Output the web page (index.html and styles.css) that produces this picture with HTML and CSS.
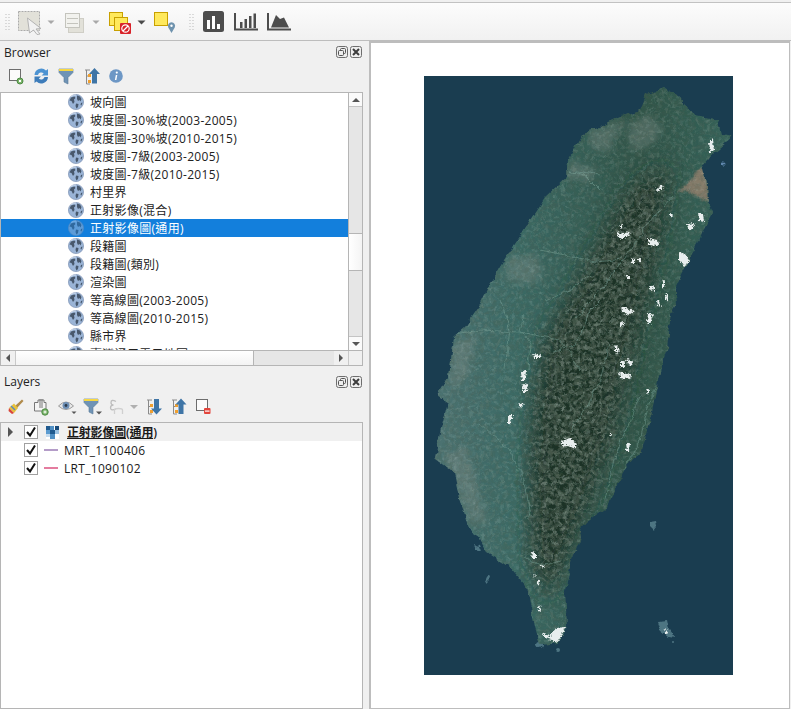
FILE: index.html
```html
<!DOCTYPE html>
<html lang="zh-Hant">
<head>
<meta charset="utf-8">
<title>QGIS</title>
<link rel="stylesheet" href="styles.css">
</head>
<body>
<svg class="defs" width="0" height="0" aria-hidden="true">
  <defs>
    <symbol id="globe" viewBox="0 0 16 16">
      <circle cx="8" cy="8" r="7.600" fill="#9ab4d6" stroke="#7f94b4" stroke-width=".7"/>
      <path d="M3 3.500 6.500 2.500 7.500 4 6 5.500 6.500 8 5 10 3.500 7 1.500 6.500ZM9 1.500 12 2.500 13.500 5 12.500 7.500 11.500 6 10 7 9 5ZM8 9.500 10.500 10 10 13 8.500 14.500 7.500 12ZM13 9 14.500 8.500 13.500 11.500 12.500 11Z" fill="#48586c"/>
      <path d="M3 2.500A7 7 0 0 1 8 1" stroke="#dfe8f4" stroke-width=".8" fill="none"/>
    </symbol>
    <symbol id="check" viewBox="0 0 14 14">
      <path d="M3 7 6 10.500 11 2.500" fill="none" stroke="#111" stroke-width="2"/>
    </symbol>
    <symbol id="dockfloat" viewBox="0 0 12 12">
      <rect x=".5" y=".5" width="11" height="11" rx="2" fill="#eee" stroke="#6e6e6e"/>
      <rect x="4.500" y="2.500" width="5" height="5" rx="1" fill="none" stroke="#555"/>
      <rect x="2.500" y="4.500" width="5" height="5" rx="1" fill="#eee" stroke="#555"/>
    </symbol>
    <symbol id="dockclose" viewBox="0 0 12 12">
      <rect x=".5" y=".5" width="11" height="11" rx="2" fill="#eee" stroke="#6e6e6e"/>
      <path d="M3 3 9 9M9 3 3 9" stroke="#3c3c3c" stroke-width="2"/>
    </symbol>
    <filter id="noiseDark" x="0" y="0" width="100%" height="100%">
      <feTurbulence type="fractalNoise" baseFrequency=".2" numOctaves="3" seed="7"/>
      <feColorMatrix values="0 0 0 0 .07  0 0 0 0 .11  0 0 0 0 .08  2.600 0 0 0 -.95"/>
    </filter>
    <filter id="noiseLight" x="0" y="0" width="100%" height="100%">
      <feTurbulence type="fractalNoise" baseFrequency=".26" numOctaves="3" seed="21"/>
      <feColorMatrix values="0 0 0 0 .5  0 0 0 0 .6  0 0 0 0 .54  0 2 0 0 -.9"/>
    </filter>
    <filter id="blur10"><feGaussianBlur stdDeviation="10"/></filter>
    <filter id="blur5"><feGaussianBlur stdDeviation="3.500"/></filter>
    <filter id="blur1"><feGaussianBlur stdDeviation="1.200"/></filter>
    <filter id="blur03"><feGaussianBlur stdDeviation=".4"/></filter>
    <filter id="rough" filterUnits="userSpaceOnUse" x="424" y="76" width="309" height="599">
      <feTurbulence type="fractalNoise" baseFrequency=".09" numOctaves="4" seed="3" result="n"/>
      <feDisplacementMap in="SourceGraphic" in2="n" scale="7" xChannelSelector="R" yChannelSelector="G"/>
      <feGaussianBlur stdDeviation=".45"/>
    </filter>
    <filter id="roughFine" filterUnits="userSpaceOnUse" x="424" y="76" width="309" height="599">
      <feTurbulence type="fractalNoise" baseFrequency=".55" numOctaves="2" seed="11" result="n"/>
      <feDisplacementMap in="SourceGraphic" in2="n" scale="5" xChannelSelector="R" yChannelSelector="G"/>
      <feGaussianBlur stdDeviation=".55"/>
    </filter>
    <clipPath id="island">
      <path d="M665 88 677 95 683 105 697 115 718 120 722 135 732 137 713 153 703 165 707 183 708 203 712 213 703 230 695 250 683 270 675 287 677 303 672 313 667 347 658 380 653 407 642 450 627 467 612 495 608 507 583 525 580 540 572 560 565 590 567 627 558 643 540 645 535 628 527 587 510 567 487 552 467 523 460 497 455 473 435 458 440 433 448 403 437 395 448 377 453 337 465 327 477 310 488 287 500 267 513 245 530 220 545 197 567 177 568 160 583 133 617 118 640 110 647 93Z"/>
    </clipPath>
    <mask id="ridgeMask" maskUnits="userSpaceOnUse" x="424" y="76" width="309" height="599">
      <path d="M668 165 660 230 645 300 630 360 612 440 590 500 565 560 548 600 532 560 530 470 535 400 545 340 590 260 630 190Z" fill="#fff" filter="url(#blur10)"/>
    </mask>
  </defs>
</svg>

<header class="maintb">
  <svg viewBox="0 3 14 37"><path d="M6 14v1M9 14v1M6 17v1M9 17v1M6 20v1M9 20v1M6 23v1M9 23v1M6 26v1M9 26v1M6 29v1M9 29v1" stroke="#bbb"/></svg>
  <svg viewBox="14 3 30 37">
    <rect x="18.500" y="11.500" width="21" height="19" fill="#e2e1d9" stroke="#aaa" stroke-dasharray="2 1"/>
    <path d="M27.500 18 41 28.500 36 29 40 34 37 34.500 33.500 30 29.500 33Z" fill="#f2f2f2" stroke="#b3b3b3"/>
  </svg>
  <svg viewBox="44 3 16 37"><path d="M47.500 20.500h7l-3.500 3.500Z" fill="#a8a8a8"/></svg>
  <svg viewBox="60 3 28 37">
    <rect x="68.500" y="18.500" width="15" height="14" fill="#e2e1d9" stroke="#cfcec6"/>
    <rect x="65.500" y="13.500" width="14" height="14" fill="#f2f2ee" stroke="#c4c4bd"/>
    <path d="M67 18.500h11M67 23.500h11" stroke="#c4c4bd"/>
  </svg>
  <svg viewBox="88 3 16 37"><path d="M92.500 20.500h7l-3.500 3.500Z" fill="#a8a8a8"/></svg>
  <svg viewBox="104 3 30 37">
    <rect x="109.500" y="12.500" width="13" height="13" fill="#ffe95c" stroke="#c8a000"/>
    <rect x="114.500" y="17.500" width="13" height="13" fill="#ffe95c" stroke="#c8a000"/>
    <rect x="120" y="23" width="11" height="11" rx="1" fill="#d8232a"/>
    <circle cx="125.500" cy="28.500" r="3.700" fill="none" stroke="#fff" stroke-width="1.200"/>
    <path d="M123 31 128 26" stroke="#fff" stroke-width="1.200"/>
  </svg>
  <svg viewBox="134 3 16 37"><path d="M137.500 20.500h8l-4 4Z" fill="#4a4a4a"/></svg>
  <svg viewBox="150 3 30 37">
    <rect x="154.500" y="12.500" width="13" height="13" fill="#ffe95c" stroke="#c8a000"/>
    <path d="M171.500 33 168.300 27.500A3.600 3.600 0 1 1 174.700 27.500Z" fill="#6f93ae"/>
    <circle cx="171.500" cy="25.800" r="1.200" fill="#fff"/>
  </svg>
  <svg viewBox="180 3 18 37"><path d="M190 14v1M193 14v1M190 17v1M193 17v1M190 20v1M193 20v1M190 23v1M193 23v1M190 26v1M193 26v1M190 29v1M193 29v1" stroke="#bbb"/></svg>
  <svg viewBox="198 3 30 37">
    <rect x="203" y="11" width="21" height="21" rx="2.500" fill="#4d4d4d"/>
    <path d="M207 20h3v9h-3ZM212 16h3v13h-3ZM217 24h3v5h-3Z" fill="#fff"/>
  </svg>
  <svg viewBox="228 3 34 37">
    <path d="M235 13v16.500h23" fill="none" stroke="#4d4d4d" stroke-width="2"/>
    <path d="M240 22h2.500v6H240ZM244.500 19h2.500v9h-2.500ZM249 16h2.500v12H249ZM253.500 13.500h2.500V28h-2.500Z" fill="#4d4d4d"/>
  </svg>
  <svg viewBox="262 3 34 37">
    <path d="M268 13v16.500h23" fill="none" stroke="#4d4d4d" stroke-width="2"/>
    <path d="M271 27.500 276 15 280 19 284 17.500 289 27.500Z" fill="#4d4d4d"/>
  </svg>
</header>

<main class="workspace">
  <aside class="side">
    <section class="dock">
      <div class="dock-title">
        <span>Browser</span>
        <span class="dock-btns">
          <svg class="dock-ic"><use href="#dockfloat"/></svg>
          <svg class="dock-ic"><use href="#dockclose"/></svg>
        </span>
      </div>
      <div class="tb tb-browser">
        <svg viewBox="0 64 29 28">
          <rect x="9.500" y="69.500" width="11" height="11" fill="#fbfbfb" stroke="#6d6d6d"/>
          <circle cx="20" cy="81" r="3" fill="#7cb56b" stroke="#4c8a44"/>
          <rect x="19" y="80" width="2" height="2" fill="#fff"/>
        </svg>
        <svg viewBox="29 64 25 28">
          <path d="M34.500 75A6.800 6.800 0 0 1 46 70.500L48 69V75.500H41.500L43.700 73.500A3.400 3.400 0 0 0 38 75Z" fill="#4d93d2"/>
          <path d="M48 77A6.800 6.800 0 0 1 36.500 81.500L34.500 83V76.500H41L38.800 78.500A3.400 3.400 0 0 0 44.500 77Z" fill="#3d7cba"/>
        </svg>
        <svg viewBox="54 64 25 28">
          <path d="M59 69H73V72.500L68 77.500V84L64 82V77.500L59 72.500Z" fill="#6f93b5" stroke="#587a99" stroke-width=".6"/>
          <rect x="59" y="69" width="14" height="2" fill="#f6d743"/>
        </svg>
        <svg viewBox="79 64 25 28">
          <path d="M85 70H90M86.500 70V84H90M86.500 76H90" stroke="#8a8a8a" fill="none"/>
          <rect x="88" y="74" width="3" height="3" fill="#f0a030"/><rect x="88" y="80" width="3" height="3" fill="#f0a030"/>
          <path d="M94.500 68 100 74H97V83.500H92V74H89Z" fill="#3f75a6"/>
        </svg>
        <svg viewBox="104 64 25 28">
          <circle cx="116" cy="76" r="6.800" fill="#6d97c5"/>
          <circle cx="116.800" cy="72.600" r="1.100" fill="#fff"/>
          <path d="M115.800 75H117.300L116.400 80H114.900Z" fill="#fff"/>
        </svg>
      </div>
      <div class="tree tree-browser">
        <ul class="rows">
          <li class="row"><svg class="globe"><use href="#globe"/></svg>坡向圖</li>
          <li class="row"><svg class="globe"><use href="#globe"/></svg>坡度圖-30%坡(2003-2005)</li>
          <li class="row"><svg class="globe"><use href="#globe"/></svg>坡度圖-30%坡(2010-2015)</li>
          <li class="row"><svg class="globe"><use href="#globe"/></svg>坡度圖-7級(2003-2005)</li>
          <li class="row"><svg class="globe"><use href="#globe"/></svg>坡度圖-7級(2010-2015)</li>
          <li class="row"><svg class="globe"><use href="#globe"/></svg>村里界</li>
          <li class="row"><svg class="globe"><use href="#globe"/></svg>正射影像(混合)</li>
          <li class="row selected"><svg class="globe"><use href="#globe"/></svg>正射影像圖(通用)</li>
          <li class="row"><svg class="globe"><use href="#globe"/></svg>段籍圖</li>
          <li class="row"><svg class="globe"><use href="#globe"/></svg>段籍圖(類別)</li>
          <li class="row"><svg class="globe"><use href="#globe"/></svg>渲染圖</li>
          <li class="row"><svg class="globe"><use href="#globe"/></svg>等高線圖(2003-2005)</li>
          <li class="row"><svg class="globe"><use href="#globe"/></svg>等高線圖(2010-2015)</li>
          <li class="row"><svg class="globe"><use href="#globe"/></svg>縣市界</li>
          <li class="row"><svg class="globe"><use href="#globe"/></svg>臺灣通用電子地圖</li>
        </ul>
        <div class="vscroll">
          <div class="sbtn"><span class="arr up"></span></div>
          <div class="strack grow1"></div>
          <div class="sthumb"></div>
          <div class="strack grow2"></div>
          <div class="sbtn"><span class="arr down"></span></div>
        </div>
        <div class="hscroll">
          <div class="hbtn"><span class="arr left"></span></div>
          <div class="hthumb"></div>
          <div class="htrack"></div>
          <div class="hbtn"><span class="arr right"></span></div>
          <div class="corner"></div>
        </div>
      </div>
    </section>

    <div class="splitter"></div>

    <section class="dock dock-grow">
      <div class="dock-title title-layers">
        <span>Layers</span>
        <span class="dock-btns">
          <svg class="dock-ic"><use href="#dockfloat"/></svg>
          <svg class="dock-ic"><use href="#dockclose"/></svg>
        </span>
      </div>
      <div class="tb tb-layers">
        <svg viewBox="0 394 29 27">
          <path d="M15 406 22 399.500 23.500 401 17 408Z" fill="#b08a4a"/>
          <path d="M9 408 14 403.500 18 408 14 413Z" fill="#e8c23a"/>
          <path d="M9 408 14 413 12 414 8.500 411Z" fill="#d8453a"/>
          <path d="M11 406 15 410" stroke="#5a86c0" stroke-width="1.500"/>
        </svg>
        <svg viewBox="29 394 25 27">
          <path d="M34.500 402.500H38V400H44V402.500H46V411H34.500Z" fill="#f4f4f4" stroke="#777"/>
          <path d="M40 399V408M42 399V408" stroke="#777"/>
          <circle cx="45" cy="412" r="3.200" fill="#7cb56b" stroke="#4c8a44"/>
          <path d="M43.500 412h3M45 410.500v3" stroke="#fff"/>
        </svg>
        <svg viewBox="54 394 26 27">
          <path d="M58.500 406Q66 398 73.500 406Q66 413 58.500 406Z" fill="#e8e8e8" stroke="#9a9a9a"/>
          <circle cx="66" cy="405.500" r="3.500" fill="#6d8fb5"/>
          <circle cx="66" cy="405.500" r="1.400" fill="#2b3a4c"/>
          <path d="M71.500 411.500h5l-2.500 2.500Z" fill="#555"/>
        </svg>
        <svg viewBox="80 394 26 27">
          <path d="M84 399H98V402.500L93 407.500V414L89 412V407.500L84 402.500Z" fill="#6f93b5" stroke="#587a99" stroke-width=".6"/>
          <rect x="84" y="399" width="14" height="2" fill="#f6d743"/>
          <path d="M96 411.500h6l-3 3Z" fill="#555"/>
        </svg>
        <svg viewBox="106 394 20 27">
          <path d="M116 401.500Q111 399 111 402.500Q111 405 113.500 405Q110.500 405 110.500 408Q110.500 411 116 409" fill="none" stroke="#bdbdbd" stroke-width="1.300"/>
          <path d="M114.500 414V410Q114.500 408.500 118.500 408.500Q122.500 408.500 122.500 410V414" fill="none" stroke="#d0d0d0" stroke-width="1.300"/>
        </svg>
        <svg viewBox="126 394 16 27"><path d="M130 405h8l-4 4Z" fill="#b0b0b0"/></svg>
        <svg viewBox="142 394 25 27">
          <path d="M147 400H152M148.500 400V414H152M148.500 406.500H152" stroke="#8a8a8a" fill="none"/>
          <rect x="150" y="404" width="3" height="3" fill="#f0a030"/><rect x="150" y="410" width="3" height="3" fill="#f0a030"/>
          <path d="M156.500 414.500 162 408.500H159V399H154V408.500H151Z" fill="#3f75a6"/>
        </svg>
        <svg viewBox="167 394 25 27">
          <path d="M172 400H177M173.500 400V414H177M173.500 406.500H177" stroke="#8a8a8a" fill="none"/>
          <rect x="175" y="404" width="3" height="3" fill="#f0a030"/><rect x="175" y="410" width="3" height="3" fill="#f0a030"/>
          <path d="M181 398.500 186.500 404.500H183.500V414H178.500V404.500H175.500Z" fill="#3f75a6"/>
        </svg>
        <svg viewBox="192 394 24 27">
          <rect x="196.500" y="399.500" width="11" height="11" fill="#fbfbfb" stroke="#6d6d6d"/>
          <rect x="204" y="408" width="6.500" height="6" rx="1" fill="#e2453c"/>
          <rect x="205" y="410.500" width="4.500" height="1.200" fill="#fff"/>
        </svg>
      </div>
      <div class="tree tree-layers">
        <div class="lrow lrow-current">
          <span class="twist"></span>
          <span class="cb"><svg class="ck"><use href="#check"/></svg></span>
          <svg class="rast" viewBox="0 0 13 13">
            <rect width="13" height="13" fill="#fff"/>
            <rect width="4" height="4" fill="#1f5a8f"/><rect x="4" width="4" height="4" fill="#4f8fc4"/><rect x="9" width="4" height="4" fill="#174a7a"/>
            <rect y="4" width="4" height="4" fill="#5b9bd0"/><rect x="4" y="4" width="5" height="4" fill="#1f5a8f"/><rect x="9" y="4" width="4" height="4" fill="#9cc2e2"/>
            <rect x="4" y="8" width="5" height="5" fill="#4f8fc4"/><rect y="8" width="4" height="3" fill="#c4dbef"/>
          </svg>
          <span class="cur-name lname">正射影像圖(通用)</span>
        </div>
        <div class="lrow">
          <span class="twist-empty"></span>
          <span class="cb"><svg class="ck"><use href="#check"/></svg></span>
          <span class="sym sym-mrt"></span>
          <span class="lname">MRT_1100406</span>
        </div>
        <div class="lrow">
          <span class="twist-empty"></span>
          <span class="cb"><svg class="ck"><use href="#check"/></svg></span>
          <span class="sym sym-lrt"></span>
          <span class="lname">LRT_1090102</span>
        </div>
      </div>
    </section>
  </aside>

  <section class="canvas">
    <svg class="map" viewBox="424 76 309 599" role="img" aria-label="正射影像圖">
      <defs>
        <linearGradient id="landGrad" x1="0" y1="0" x2="1" y2="0">
          <stop offset="0" stop-color="#4f7474"/>
          <stop offset=".3" stop-color="#3b6a65"/>
          <stop offset=".7" stop-color="#2f5448"/>
          <stop offset="1" stop-color="#35635a"/>
        </linearGradient>
      </defs>
      <rect x="424" y="76" width="309" height="599" fill="#1a3d50"/>
      <g fill="#4d7482" filter="url(#rough)">
        <path d="M650 522 656 521 657 527 654 531 650 527Z"/>
        <path d="M657 621 667 620 669 630 674 637 668 636 660 630Z"/>
        <path d="M484 578 490 574 491 577 486 582Z"/>
        <ellipse cx="724" cy="164.500" rx="2.500" ry="1" fill="#5f86ac"/>
        <circle cx="672" cy="643" r="1"/>
        <circle cx="540" cy="646" r="3"/>
        <circle cx="559" cy="649" r="2"/>
        <path d="M474 544 480 546 482 551 476 549Z"/>
      </g>
      <g filter="url(#rough)">
        <g clip-path="url(#island)">
          <rect x="424" y="76" width="309" height="599" fill="url(#landGrad)"/>
          <path d="M668 165 660 230 645 300 630 360 612 440 590 500 565 560 548 600 532 560 530 470 535 400 545 340 590 260 630 190Z" fill="#1f3026" filter="url(#blur10)"/>
          <g filter="url(#blur5)" fill="#7f8d88" opacity=".42">
            <path d="M628 125 650 114 662 130 650 145 632 152Z"/>
            <path d="M572 160 598 172 590 182 566 178Z"/>
            <path d="M508 258 538 254 542 278 525 286 506 278Z"/>
            <path d="M445 455 465 445 478 490 488 526 470 520 456 480Z"/>
            <path d="M452 345 478 332 468 375 452 392Z"/>
            <path d="M590 130 625 120 610 150 590 150Z"/>
          </g>
          <path d="M678 192 706 165 708 203 688 190Z" fill="#94806e" filter="url(#blur1)" opacity=".85"/>
          <rect x="424" y="76" width="309" height="599" filter="url(#noiseLight)" opacity=".28"/>
          <rect x="424" y="76" width="309" height="599" filter="url(#noiseDark)" opacity=".3"/>
          <g mask="url(#ridgeMask)">
            <rect x="424" y="76" width="309" height="599" filter="url(#noiseDark)" opacity=".8"/>
            <rect x="424" y="76" width="309" height="599" filter="url(#noiseLight)" opacity=".38"/>
          </g>
          <g fill="none" stroke="#7ba398" stroke-width="1" opacity=".5" filter="url(#blur03)">
            <path d="M672 195 650 222 625 258 600 290 575 320"/>
            <path d="M640 393 628 425 615 455 605 500"/>
            <path d="M540 250 565 255 590 262 622 258"/>
            <path d="M448 335 480 330 520 332 560 340 580 370"/>
            <path d="M525 313 520 330 530 345 528 370"/>
            <path d="M480 425 510 450 525 480 530 520"/>
            <path d="M520 555 540 565 560 560"/>
            <path d="M552 350 575 345 590 310 600 300"/>
            <path d="M600 190 585 175 570 170 600 175"/>
            <path d="M660 380 650 400 640 440 625 470"/>
            <path d="M545 300 570 290 590 275"/>
            <path d="M610 345 600 380 585 410 570 430"/>
            <path d="M500 300 510 330 505 370"/>
          </g>
        </g>
      </g>
      <g fill="#e8eeee" filter="url(#roughFine)">
        <path d="M709 142 713 138 714 150 710 153ZM656 189 662 185 663 188 658 192ZM698 213 703 214 704 222 699 221ZM687 224 695 223 692 229 688 229ZM670 213 673 214 672 218 670 217Z"/>
        <path d="M648 239 658 240 659 246 649 245ZM679 252 685 254 690 262 684 266 679 260ZM617 232 623 234 630 231 628 236 621 239 618 237ZM619 226 622 225 622 229ZM631 258 635 259 635 264 632 263ZM637 258 641 258 640 263ZM626 275 630 275 630 279 627 279Z"/>
        <path d="M662 281 665 280 664 288 662 287ZM650 285 655 288 654 291 650 289ZM657 300 659 301 661 307 658 306ZM666 293 668 296 667 301 665 298ZM621 306 634 311 629 315 622 312ZM648 313 653 314 650 325 647 322ZM620 321 624 323 622 327 620 326Z"/>
        <path d="M615 345 620 350 617 353 615 350ZM621 360 626 362 624 368 621 366ZM627 359 633 361 631 366 628 365ZM619 372 631 375 630 379 620 378ZM533 354 541 355 540 358 534 358ZM521 372 526 370 525 381 522 381ZM522 385 528 383 527 392 523 392ZM518 403 524 404 520 408ZM508 415 513 415 510 424 508 424Z"/>
        <path d="M561 441 570 438 577 444 575 449 567 445 563 447ZM626 443 630 443 629 451 627 451ZM608 434 612 434 611 437ZM646 389 650 390 648 395ZM532 552 536 553 536 558 531 558ZM541 565 545 566 543 568ZM533 574 537 575 535 577ZM537 580 540 581 539 585 537 584ZM538 605 540 605 541 612 539 611Z"/>
        <path d="M541 633 550 636 556 628 565 627 562 635 557 643 552 640 545 638ZM664 627 666 630 669 634 666 633Z"/>
      </g>
    </svg>
  </section>
</main>
</body>
</html>
```
FILE: styles.css
```css
* { box-sizing: border-box; }
html, body { margin: 0; padding: 0; }
body {
  width: 791px;
  height: 709px;
  overflow: hidden;
  background: #f0f0f0;
  color: #1a1a1a;
  font: 12px/18px "Open Sans", "Noto Sans CJK TC", sans-serif;
  display: flex;
  flex-direction: column;
}
.defs { display: block; height: 0; }

.maintb {
  height: 39px;
  flex: none;
  margin-top: 2px;
  border-top: 1px solid #c2c2c2;
  border-bottom: 1px solid #bdbdbd;
  background: linear-gradient(#fcfcfc, #f1f1f1);
  display: grid;
  grid-template-columns: 14px 30px 16px 28px 16px 30px 16px 30px 18px 30px 34px 34px;
}
.maintb svg { width: 100%; height: 37px; display: block; }

.workspace {
  flex: 1;
  min-height: 0;
  display: grid;
  grid-template-columns: 363px 1fr;
  column-gap: 6px;
  padding-right: 1px;
}
.side { display: flex; flex-direction: column; min-height: 0; }
.dock { display: flex; flex-direction: column; flex: none; }
.dock-grow { flex: 1; min-height: 0; }

.dock-title {
  height: 23px;
  flex: none;
  display: flex;
  justify-content: space-between;
  align-items: center;
  padding: 0 1px 0 4px;
  color: #222;
}
.title-layers { height: 22px; padding-bottom: 2px; }
.dock-btns { display: flex; gap: 2px; align-self: flex-start; margin-top: 5px; }
.title-layers .dock-btns { margin-top: 4px; }
.dock-ic { width: 12px; height: 12px; display: block; }

.tb { display: grid; flex: none; }
.tb svg { width: 100%; height: 100%; display: block; }
.tb-browser { height: 28px; grid-template-columns: 29px 25px 25px 25px 25px; }
.tb-layers { height: 27px; grid-template-columns: 29px 25px 26px 26px 20px 16px 25px 25px 24px; }

.tree {
  background: #fff;
  border: 1px solid #b5b5b5;
}
.tree-browser {
  height: 274px;
  flex: none;
  display: grid;
  grid-template-columns: 1fr 14px;
  grid-template-rows: 1fr 15px;
  overflow: hidden;
}
.tree-layers { flex: 1; min-height: 0; margin-top: 1px; }

.rows {
  list-style: none;
  margin: 0;
  padding: 0;
  overflow: hidden;
  min-height: 0;
}
.row {
  height: 18px;
  display: flex;
  align-items: center;
  padding: 2px 0 0 67px;
  white-space: nowrap;
  color: #222;
  letter-spacing: .3px;
}
.globe { width: 16px; height: 16px; margin: -2px 6px 0 0; flex: none; }
.selected { background: #137fdc; color: #fff; }
.selected .globe { opacity: .55; }

.vscroll { display: flex; flex-direction: column; border-left: 1px solid #b5b5b5; min-height: 0; background: #e6e6e6; }
.sbtn {
  height: 14px;
  flex: none;
  background: #fafafa;
  border-bottom: 1px solid #c4c4c4;
  display: flex;
  align-items: center;
  justify-content: center;
}
.sbtn:last-child { border-bottom: 0; border-top: 1px solid #c4c4c4; }
.strack { background: #e6e6e6; }
.grow1 { flex: 127; }
.grow2 { flex: 65; }
.sthumb {
  height: 38px;
  flex: none;
  background: linear-gradient(90deg, #fff, #f4f4f4);
  border-top: 1px solid #b5b5b5;
  border-bottom: 1px solid #b5b5b5;
}

.hscroll {
  grid-column: 1 / -1;
  border-top: 1px solid #b5b5b5;
  display: grid;
  grid-template-columns: 14px 239px 80px 14px 1fr;
  background: #f0f0f0;
}
.hbtn {
  background: #f0f0f0;
  display: flex;
  align-items: center;
  justify-content: center;
}
.hthumb { background: linear-gradient(#fff, #f3f3f3); border-left: 1px solid #c9c9c9; border-right: 1px solid #b5b5b5; }
.htrack { background: #e6e6e6; }
.corner { background: #f0f0f0; border-left: 1px solid #c9c9c9; }

.arr { width: 0; height: 0; display: block; border-style: solid; border-color: transparent; }
.up { border-width: 0 4px 4px; border-bottom-color: #555; }
.down { border-width: 4px 4px 0; border-top-color: #555; }
.left { border-width: 4px 4px 4px 0; border-right-color: #555; }
.right { border-width: 4px 0 4px 4px; border-left-color: #555; }

.splitter { height: 6px; flex: none; }

.lrow { height: 18px; display: flex; align-items: center; padding-left: 7px; white-space: nowrap; color: #1a1a1a; letter-spacing: .3px; }
.lrow-current { background: #f0f0f0; }
.lname { margin-top: 1px; }
.twist { width: 0; height: 0; border-style: solid; border-width: 5px 0 5px 5px; border-color: transparent transparent transparent #555; margin-right: 11px; flex: none; }
.twist-empty { width: 16px; flex: none; }
.cb { width: 14px; height: 14px; background: #fff; border: 1px solid #a0a0a0; display: block; flex: none; margin-right: 6px; }
.ck { width: 14px; height: 14px; display: block; margin: -1px; }
.rast { width: 13px; height: 13px; flex: none; margin-left: 2px; margin-right: 8px; }
.cur-name { text-decoration: underline; font-weight: 600; letter-spacing: -.2px; }
.sym { width: 14px; height: 2px; flex: none; margin-right: 6px; }
.sym-mrt { background: #b49cc8; }
.sym-lrt { background: #e47c9f; }

.canvas {
  background: #fff;
  border-style: solid;
  border-width: 2px 1px 1px 2px;
  border-color: #bdbdbd;
  padding: 33px 0 0 53px;
  overflow: hidden;
  min-height: 0;
}
.map { display: block; width: 309px; height: 599px; }
```
